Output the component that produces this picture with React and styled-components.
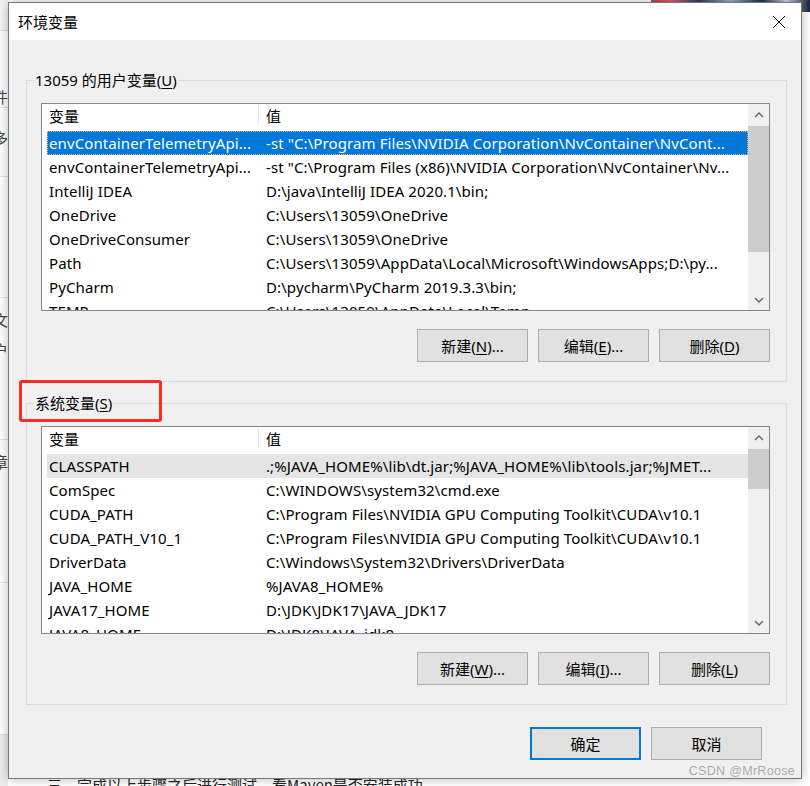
import React from 'react'
import styled, { createGlobalStyle } from 'styled-components'

const GlobalStyle = createGlobalStyle`
  html, body {
    margin: 0;
    padding: 0;
  }
  body {
    width: 810px;
    height: 786px;
    overflow: hidden;
    background: #ffffff;
    font-family: "Noto Sans", "Noto Sans CJK SC", sans-serif;
  }
`

const font = `"Noto Sans", "Noto Sans CJK SC", sans-serif`

const Page = styled.div`
  position: relative;
  width: 810px;
  height: 786px;
  overflow: hidden;
  background: #fff;
`

// the blog page behind the dialog, only its edges show
const Article = styled.div`
  display: flex;
  height: 786px;
  font-family: "Noto Sans CJK SC", sans-serif;
  color: #333;
`

const Side = styled.div`
  width: 24px;
  margin-left: -16px;
  flex: none;
  display: flex;
  flex-direction: column;
`

const SideBlock = styled.div`
  height: ${p => p.$h}px;
  flex: none;
  box-sizing: border-box;
  background: ${p => p.$bg || '#fff'};
  border-bottom: 1px solid ${p => p.$line || '#e4e4e4'};
  display: flex;
  flex-direction: column;
  align-items: flex-end;
  padding-top: ${p => p.$pad || 0}px;
  gap: 14px;
  font-size: 15px;
  line-height: 16px;
  color: #444;
`

const ArticleMain = styled.div`
  flex: 1;
  padding: 773px 0 0 39px;
`

const ArticleHeading = styled.div`
  font-size: 15px;
  line-height: 24px;
  white-space: nowrap;
  color: #222;
`

const PhotoStrip = styled.div`
  position: absolute;
  top: 0;
  right: 0;
  width: 159px;
  height: 12px;
  background: linear-gradient(90deg, #c23a4a 0%, #e45e6b 12%, #2d3f66 30%, #9fb0cc 50%, #1f2e50 70%, #cfd7e6 85%, #16233f 100%);
`

const Dialog = styled.div`
  position: absolute;
  left: 8px;
  top: 2px;
  width: 794px;
  height: 777px;
  box-sizing: border-box;
  border: 1px solid #787878;
  background: #f0f0f0;
  box-shadow: 0 0 10px rgba(0, 0, 0, 0.28);
  display: flex;
  flex-direction: column;
  font-family: ${font};
  font-size: 15px;
  color: #000;
`

const TitleBar = styled.div`
  height: 37px;
  flex: none;
  background: #fff;
  display: flex;
  align-items: center;
  justify-content: space-between;
  padding-left: 9px;
`

const Title = styled.div`
  font-size: 15px;
  font-family: "Noto Sans CJK SC", sans-serif;
`

const CloseButton = styled.div`
  width: 44px;
  height: 37px;
  display: flex;
  align-items: center;
  justify-content: center;
`

const Body = styled.div`
  flex: 1;
  display: flex;
  flex-direction: column;
  padding: 30px 14px 0 17px;
`

const Group = styled.fieldset`
  margin: 0 0 ${p => p.$gap || 0}px;
  padding: 13px 16px 19px 14px;
  border: 1px solid #dcdcdc;
  min-width: 0;
  display: flex;
  flex-direction: column;
`

const Legend = styled.legend`
  position: relative;
  margin-left: -7px;
  padding: 0 1px;
  font-size: 15px;
  line-height: 20px;
  height: 20px;
`

const Mark = styled.div`
  position: absolute;
  left: -15px;
  top: -13px;
  width: 143px;
  height: 42px;
  box-sizing: border-box;
  border: 3px solid #fb2a22;
  border-radius: 3px;
  pointer-events: none;
`

const Key = styled.span`
  text-decoration: underline;
  text-underline-offset: 2px;
`

const ListBox = styled.div`
  height: 208px;
  box-sizing: border-box;
  border: 1px solid #828790;
  background: #fff;
  display: flex;
  overflow: hidden;
`

const Table = styled.div`
  flex: 1;
  min-width: 0;
  padding-left: 5px;
  display: flex;
  flex-direction: column;
`

const HeaderRow = styled.div`
  height: 27px;
  flex: none;
  display: flex;
  box-sizing: border-box;
  padding-top: 2px;
`

const HeadCell = styled.div`
  box-sizing: border-box;
  width: ${p => (p.$first ? '212px' : 'auto')};
  flex: ${p => (p.$first ? 'none' : '1')};
  padding-left: ${p => (p.$first ? '2px' : '7px')};
  border-right: ${p => (p.$first ? '1px solid #e5e5e5' : 'none')};
  height: 19px;
  margin-top: -1px;
`

const HeadText = styled.span`
  display: block;
  margin-top: 1px;
  height: 19px;
  line-height: 19px;
  font-family: "Noto Sans CJK SC", sans-serif;
`

const Row = styled.div`
  height: 24px;
  flex: none;
  display: flex;
  box-sizing: border-box;
  line-height: 22px;
  white-space: nowrap;
  letter-spacing: 0.1px;
  background: ${p => (p.$state === 'active' ? '#0078d7' : p.$state === 'inactive' ? '#e5e5e5' : 'transparent')};
  color: ${p => (p.$state === 'active' ? '#fff' : '#000')};
  border: 1px ${p => (p.$state === 'active' ? 'dotted #f2b46a' : 'solid transparent')};
`

const Cell = styled.div`
  box-sizing: border-box;
  width: ${p => (p.$first ? '211px' : 'auto')};
  flex: ${p => (p.$first ? 'none' : '1')};
  padding-left: ${p => (p.$first ? '1px' : '7px')};
  overflow: hidden;
  white-space: nowrap;
`

const ScrollBar = styled.div`
  width: 21px;
  flex: none;
  background: #f0f0f0;
  display: flex;
  flex-direction: column;
`

const Arrow = styled.div`
  height: 21px;
  flex: none;
  display: flex;
  align-items: center;
  justify-content: center;
`

const Track = styled.div`
  flex: 1;
  display: flex;
  flex-direction: column;
`

const Thumb = styled.div`
  height: ${p => p.$size}px;
  margin-top: ${p => p.$offset}px;
  background: #cdcdcd;
`

const ButtonRow = styled.div`
  display: flex;
  justify-content: flex-end;
  gap: 10px;
  margin-top: 18px;
  padding-right: ${p => p.$inset || 0}px;
`

const Button = styled.div`
  width: 111px;
  height: 33px;
  box-sizing: border-box;
  background: #e1e1e1;
  border: ${p => (p.$default ? '2px solid #0078d7' : '1px solid #adadad')};
  display: flex;
  align-items: center;
  justify-content: center;
  font-size: 15px;
  white-space: nowrap;
`

const Footer = styled(ButtonRow)`
  margin-top: 22px;
`

const Watermark = styled.div`
  position: absolute;
  right: 15px;
  bottom: 8px;
  font-family: "Liberation Sans", sans-serif;
  font-size: 12.5px;
  line-height: 14px;
  color: rgba(120, 120, 120, 0.6);
  letter-spacing: 0.3px;
`

const sideBlocks = [
  { h: 31, bg: '#f4f4f4', line: '#d4d4d4', chars: [] },
  { h: 77, pad: 58, chars: ['件'] },
  { h: 69, pad: 22, chars: ['多'] },
  { h: 121, pad: 28, chars: ['，'] },
  { h: 142, pad: 14, chars: ['文', '户'] },
  { h: 143, pad: 14, chars: ['章', '、'] },
  { h: 152, chars: [] },
  { h: 51, bg: '#ececec', line: '#ececec', chars: [] },
]

const userVars = [
  ['envContainerTelemetryApi...', '-st "C:\\Program Files\\NVIDIA Corporation\\NvContainer\\NvCont...'],
  ['envContainerTelemetryApi...', '-st "C:\\Program Files (x86)\\NVIDIA Corporation\\NvContainer\\Nv...'],
  ['IntelliJ IDEA', 'D:\\java\\IntelliJ IDEA 2020.1\\bin;'],
  ['OneDrive', 'C:\\Users\\13059\\OneDrive'],
  ['OneDriveConsumer', 'C:\\Users\\13059\\OneDrive'],
  ['Path', 'C:\\Users\\13059\\AppData\\Local\\Microsoft\\WindowsApps;D:\\py...'],
  ['PyCharm', 'D:\\pycharm\\PyCharm 2019.3.3\\bin;'],
  ['TEMP', 'C:\\Users\\13059\\AppData\\Local\\Temp'],
]

const sysVars = [
  ['CLASSPATH', '.;%JAVA_HOME%\\lib\\dt.jar;%JAVA_HOME%\\lib\\tools.jar;%JMET...'],
  ['ComSpec', 'C:\\WINDOWS\\system32\\cmd.exe'],
  ['CUDA_PATH', 'C:\\Program Files\\NVIDIA GPU Computing Toolkit\\CUDA\\v10.1'],
  ['CUDA_PATH_V10_1', 'C:\\Program Files\\NVIDIA GPU Computing Toolkit\\CUDA\\v10.1'],
  ['DriverData', 'C:\\Windows\\System32\\Drivers\\DriverData'],
  ['JAVA_HOME', '%JAVA8_HOME%'],
  ['JAVA17_HOME', 'D:\\JDK\\JDK17\\JAVA_JDK17'],
  ['JAVA8_HOME', 'D:\\JDK8\\JAVA_jdk8'],
]

function Chevron({ down }) {
  return (
    <svg width="10" height="6" viewBox="0 0 10 6">
      <path
        d={down ? 'M1 1 L5 5 L9 1' : 'M1 5 L5 1 L9 5'}
        fill="none"
        stroke="#606060"
        strokeWidth="1.3"
      />
    </svg>
  )
}

function VarList({ rows, selected, thumb }) {
  return (
    <ListBox>
      <Table>
        <HeaderRow>
          <HeadCell $first><HeadText>变量</HeadText></HeadCell>
          <HeadCell><HeadText>值</HeadText></HeadCell>
        </HeaderRow>
        {rows.map(([name, value], i) => (
          <Row key={name + i} $state={i === 0 ? selected : null}>
            <Cell $first>{name}</Cell>
            <Cell>{value}</Cell>
          </Row>
        ))}
      </Table>
      <ScrollBar>
        <Arrow><Chevron /></Arrow>
        <Track>
          <Thumb $offset={thumb[0]} $size={thumb[1]} />
        </Track>
        <Arrow><Chevron down /></Arrow>
      </ScrollBar>
    </ListBox>
  )
}

export default function App() {
  return (
    <Page>
      <GlobalStyle />
      <Article>
        <Side>
          {sideBlocks.map((b, i) => (
            <SideBlock key={i} $h={b.h} $bg={b.bg} $line={b.line} $pad={b.pad}>
              {b.chars.map(c => <span key={c}>{c}</span>)}
            </SideBlock>
          ))}
        </Side>
        <ArticleMain>
          <ArticleHeading>三、完成以上步骤之后进行测试，看Maven是否安装成功</ArticleHeading>
        </ArticleMain>
      </Article>
      <PhotoStrip />

      <Dialog>
        <TitleBar>
          <Title>环境变量</Title>
          <CloseButton>
            <svg width="14" height="14" viewBox="0 0 14 14">
              <path d="M1 1 L13 13 M13 1 L1 13" stroke="#000" strokeWidth="1" />
            </svg>
          </CloseButton>
        </TitleBar>

        <Body>
          <Group $gap={11}>
            <Legend>13059 的用户变量(<Key>U</Key>)</Legend>
            <VarList rows={userVars} selected="active" thumb={[1, 126]} />
            <ButtonRow>
              <Button>新建(<Key>N</Key>)...</Button>
              <Button>编辑(<Key>E</Key>)...</Button>
              <Button>删除(<Key>D</Key>)</Button>
            </ButtonRow>
          </Group>

          <Group>
            <Legend>
              系统变量(<Key>S</Key>)
              <Mark />
            </Legend>
            <VarList rows={sysVars} selected="inactive" thumb={[1, 40]} />
            <ButtonRow>
              <Button>新建(<Key>W</Key>)...</Button>
              <Button>编辑(<Key>I</Key>)...</Button>
              <Button>删除(<Key>L</Key>)</Button>
            </ButtonRow>
          </Group>

          <Footer $inset={25}>
            <Button $default>确定</Button>
            <Button>取消</Button>
          </Footer>
        </Body>
      </Dialog>

      <Watermark>CSDN @MrRoose</Watermark>
    </Page>
  )
}
